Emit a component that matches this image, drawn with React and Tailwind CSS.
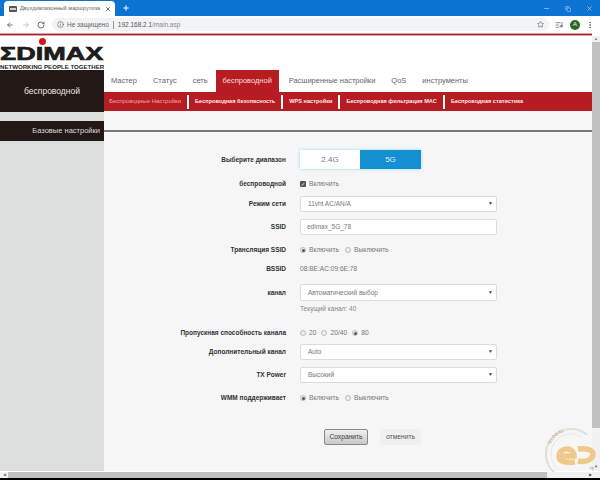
import React from "react";
import { ArrowLeft, ArrowRight, RotateCw, Info, Star, Plus, X, Minus, Copy, MoreVertical, ListMusic } from "lucide-react";

const font = { fontFamily: '"Liberation Sans", Arial, sans-serif' };

function Label({ children }) {
  return <div className="w-[182px] shrink-0 text-right text-[6.5px] font-bold text-[#333]">{children}</div>;
}

function Row({ label, children, className }) {
  return (
    <div className={"flex items-center gap-[14px] " + className}>
      <Label>{label}</Label>
      {children}
    </div>
  );
}

function Select({ value }) {
  return (
    <div className="flex h-full w-[197px] items-center justify-between rounded-[2px] border border-[#dcdcdc] bg-white pl-[7px] pr-[3px] text-[6.5px] text-[#777]">
      <span>{value}</span>
      <span className="text-[5px] text-[#444]">▼</span>
    </div>
  );
}

function Radio({ on, label }) {
  return (
    <span className="flex items-center gap-[3px]">
      <span className="flex h-[6px] w-[6px] items-center justify-center rounded-full border border-[#bbb] bg-[#eee]">
        {on && <span className="h-[3px] w-[3px] rounded-full bg-[#555]" />}
      </span>
      <span className="text-[6.7px] text-[#777]">{label}</span>
    </span>
  );
}

function Sub({ children, last }) {
  return (
    <div className={"flex h-[14px] items-center px-[6px] text-[5.6px] font-bold text-[#fbe9e9] " + (last ? "" : "border-r-2 border-white")}>
      {children}
    </div>
  );
}

function Watermark() {
  return (
    <svg className="absolute right-0 bottom-[8px]" width="58" height="44" viewBox="0 0 58 44">
      <defs>
        <path id="arc" d="M7 22 A22 22 0 0 1 36 4" />
      </defs>
      <circle cx="29" cy="26" r="25" fill="none" stroke="#e2dfd5" strokeWidth="2" strokeDasharray="80 77" transform="rotate(125 29 26)" />
      <circle cx="29" cy="26" r="20" fill="none" stroke="#ebe9e2" strokeWidth="1" strokeDasharray="62 64" transform="rotate(125 29 26)" />
      <text fontSize="4.5" fontWeight="700" fill="#bfb9a6" style={font}>
        <textPath href="#arc" startOffset="6">GLOBAL</textPath>
      </text>
      <path d="M19 28 H32 C32 23 28 21 25 21 C20 21 17 24 17 28 C17 33 21 35 33 34" fill="none" stroke="#eec98a" strokeWidth="5.5" />
      <path d="M36 33 C44 35 51 31 51 26 C51 22 45 20 36 21" fill="none" stroke="#eec98a" strokeWidth="5.5" />
      <text x="47" y="41" fontSize="4" fontWeight="700" fill="#a9a598" style={font}>.ig</text>
    </svg>
  );
}

export default function App() {
  return (
    <div className="relative flex h-[480px] w-[600px] flex-col overflow-hidden bg-white" style={font}>
      {/* Window tab strip */}
      <div className="flex h-[16px] items-end bg-[#0a74d0]">
        <div className="ml-[4px] flex h-[15px] w-[111px] items-center rounded-t-[4px] bg-white pl-[5px]">
          <span className="flex h-[6px] w-[8px] shrink-0 items-center justify-center rounded-[1px] bg-[#555]">
            <span className="h-[2px] w-[6px] bg-[#ccc]" />
          </span>
          <span className="ml-[3px] w-[84px] whitespace-nowrap text-[5.6px] text-[#666]">Двухдиапазонный маршрутиза</span>
          <X size={6} strokeWidth={3} className="ml-[1px] shrink-0 text-[#444]" />
        </div>
        <Plus size={8} strokeWidth={3} className="mb-[4px] ml-[7px] text-white" />
        <div className="mb-[4px] ml-auto flex items-center gap-[15px] pr-[7px] text-[#cfe3f5]">
          <Minus size={7} strokeWidth={2} />
          <Copy size={6} strokeWidth={2} />
          <X size={7} strokeWidth={2} />
        </div>
      </div>

      {/* Address bar */}
      <div className="flex h-[17px] items-center bg-white pl-[6px] pr-[6px]">
        <ArrowLeft size={8} strokeWidth={2.4} className="text-[#555]" />
        <ArrowRight size={8} strokeWidth={2.4} className="ml-[8px] text-[#bbb]" />
        <RotateCw size={8} strokeWidth={2.4} className="ml-[7px] text-[#555]" />
        <div className="ml-[7px] flex h-[13px] w-[198px] grow items-center rounded-full bg-[#f1f3f4] pl-[5px] pr-[5px]">
          <Info size={7} strokeWidth={2} className="text-[#555]" />
          <span className="ml-[3px] text-[6.5px] text-[#666]">Не защищено</span>
          <span className="mx-[4px] h-[8px] w-px bg-[#999]" />
          <span className="text-[6.5px] text-[#555]">192.168.2.1</span>
          <span className="text-[6.5px] text-[#888]">/main.asp</span>
          <Star size={7} strokeWidth={2} className="ml-auto text-[#555]" />
        </div>
        <ListMusic size={8} strokeWidth={2} className="ml-[6px] text-[#555]" />
        <span className="ml-[7px] flex h-[10px] w-[10px] items-center justify-center rounded-full bg-[#2a6a24] text-[6px] text-white">A</span>
        <MoreVertical size={8} strokeWidth={2.4} className="ml-[6px] text-[#555]" />
      </div>

      {/* Red rule */}
      <div className="mr-[8px] h-[3px] border-y border-y-[#d8a0a0] bg-[#a32a2e]" />

      {/* Page */}
      <div className="flex min-h-0 flex-1">
        {/* Sidebar */}
        <div className="flex w-[104px] shrink-0 flex-col bg-[#dcdedd]">
          <div className="relative h-[34px] shrink-0 overflow-hidden bg-white">
            <div className="absolute left-[39px] top-[2px] h-[7px] w-[7px] rounded-full bg-[#d8141c]" />
            <div className="mt-[9px] w-[73px] origin-left scale-x-[1.42] whitespace-nowrap text-[19px] font-bold leading-[17px] text-[#1c1c1c]" style={{ WebkitTextStroke: "0.7px #1c1c1c" }}>
              ΣDIMAX
            </div>
            <div className="mt-[1px] whitespace-nowrap text-[6.1px] font-bold leading-[7px] text-[#222]">NETWORKING PEOPLE TOGETHER</div>
          </div>
          <div className="flex h-[42px] shrink-0 items-center justify-center bg-[#231815] text-[8.5px] text-[#e8e8e8]">беспроводной</div>
          <div className="mt-[9px] flex h-[20px] shrink-0 items-center justify-end bg-[#231815] pr-[4px] text-[7.5px] text-[#ddd]">Базовые настройки</div>
        </div>

        {/* Main */}
        <div className="flex min-w-0 flex-1 flex-col bg-[#f6f6f6]">
          {/* Top nav */}
          <div className="flex h-[56px] shrink-0 items-end bg-white pl-[7px] text-[7.5px] text-[#666]">
            <div className="flex h-[22px] items-center">Мастер</div>
            <div className="ml-[16px] flex h-[22px] items-center">Статус</div>
            <div className="ml-[16px] flex h-[22px] items-center">сеть</div>
            <div className="ml-[8px] flex h-[22px] w-[63px] items-center justify-center bg-[#b71c22] text-[#f5dede]">беспроводной</div>
            <div className="ml-[10px] flex h-[22px] items-center">Расширенные настройки</div>
            <div className="ml-[16px] flex h-[22px] items-center">QoS</div>
            <div className="ml-[16px] flex h-[22px] items-center">инструменты</div>
          </div>

          {/* Sub nav */}
          <div className="flex h-[19px] shrink-0 items-center bg-[#b71c22]">
            <div className="flex h-[14px] items-center border-r-2 border-white pl-[5px] pr-[6px] text-[6px] text-[#e9a9ab]">Беспроводные Настройки</div>
            <Sub>Беспроводная безопасность</Sub>
            <Sub>WPS настройки</Sub>
            <Sub>Беспроводная фильтрация MAC</Sub>
            <Sub last>Беспроводная статистика</Sub>
          </div>

          <div className="mt-[19px] h-[2px] shrink-0 bg-[#777]" />

          {/* Form */}
          <Row label="Выберите диапазон" className="mt-[18px] h-[19px]">
            <div className="flex h-full w-[121px] shadow-[0_0_3px_#8fd8f0]">
              <div className="flex w-[60px] items-center justify-center bg-white text-[8px] text-[#777]">2.4G</div>
              <div className="flex w-[61px] items-center justify-center bg-[#1490d2] text-[8px] text-[#dff0fa]">5G</div>
            </div>
          </Row>
          <Row label="беспроводной" className="mt-[10px] h-[10px]">
            <span className="flex items-center gap-[3px]">
              <span className="flex h-[6px] w-[6px] items-center justify-center rounded-[1px] bg-[#555] text-[5px] leading-none text-white">✓</span>
              <span className="text-[6.7px] text-[#777]">Включить</span>
            </span>
          </Row>
          <Row label="Режим сети" className="mt-[7px] h-[16px]"><Select value="11vht AC/AN/A" /></Row>
          <Row label="SSID" className="mt-[7px] h-[16px]">
            <div className="flex h-full w-[197px] items-center rounded-[2px] border border-[#dcdcdc] bg-white pl-[6px] text-[6.5px] text-[#777]">edimax_5G_78</div>
          </Row>
          <Row label="Трансляция SSID" className="mt-[10px] h-[10px]">
            <div className="flex items-center gap-[6px]"><Radio on label="Включить" /><Radio label="Выключить" /></div>
          </Row>
          <Row label="BSSID" className="mt-[9px] h-[10px]">
            <span className="text-[6.6px] text-[#777]">08:BE:AC:09:6E:78</span>
          </Row>
          <Row label="канал" className="mt-[10px] h-[17px]"><Select value="Автоматический выбор" /></Row>
          <div className="mt-[3px] h-[10px] pl-[196px] text-[6.5px] leading-[10px] text-[#888]">Текущий канал: 40</div>
          <Row label="Пропускная способность канала" className="mt-[14px] h-[10px]">
            <div className="flex items-center gap-[5px]"><Radio label="20" /><Radio label="20/40" /><Radio on label="80" /></div>
          </Row>
          <Row label="Дополнительный канал" className="mt-[6px] h-[16px]"><Select value="Auto" /></Row>
          <Row label="TX Power" className="mt-[7px] h-[16px]"><Select value="Высокий" /></Row>
          <Row label="WMM поддерживает" className="mt-[10px] h-[10px]">
            <div className="flex items-center gap-[6px]"><Radio on label="Включить" /><Radio label="Выключить" /></div>
          </Row>
          <div className="mt-[26px] flex h-[16px] pl-[220px]">
            <div className="flex w-[44px] items-center justify-center rounded-[2px] border border-[#888] bg-gradient-to-b from-[#f0f0f0] to-[#c8c8c8] text-[6.7px] text-[#444]">Сохранить</div>
            <div className="ml-[12px] flex w-[41px] items-center justify-center bg-[#f0f0f0] text-[6.7px] text-[#555]">отменить</div>
          </div>
        </div>

        {/* Vertical scrollbar */}
        <div className="flex w-[8px] shrink-0 flex-col bg-[#f1f1f1]">
          <div className="flex h-[6px] items-center justify-center text-[4px] text-[#777]">▲</div>
          <div className="h-[386px] bg-[#c1c1c1]" />
          <div className="mt-auto flex h-[8px] items-center justify-center text-[4px] text-[#555]">▼</div>
        </div>
      </div>

      {/* Horizontal scrollbar */}
      <div className="flex h-[7px] shrink-0 items-center border-t border-white bg-[#f1f1f1]">
        <div className="flex h-full w-[8px] items-center justify-center text-[4px] text-[#777]">◀</div>
        <div className="h-full w-[539px] bg-[#c1c1c1]" />
        <div className="flex h-full w-[53px] items-center justify-end pr-[8px] text-[4px] text-[#555]">▶</div>
      </div>
      <div className="h-[2px] shrink-0 bg-black" />

      <Watermark />
    </div>
  );
}
